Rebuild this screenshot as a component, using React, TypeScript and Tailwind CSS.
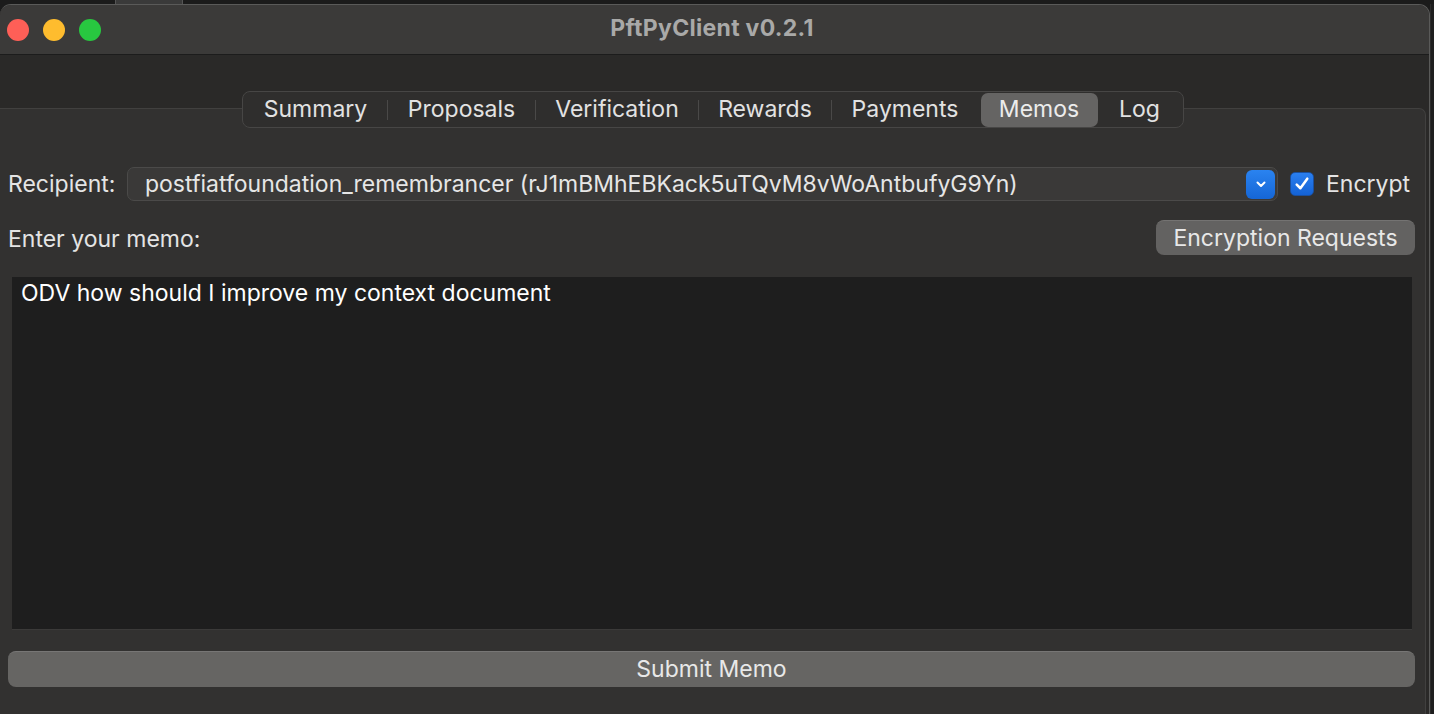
import React from "react";

const tabs = [
  { label: "Summary", w: "w-[144px]", sep: true },
  { label: "Proposals", w: "w-[148px]", sep: true },
  { label: "Verification", w: "w-[163px]", sep: true },
  { label: "Rewards", w: "w-[133px]", sep: true },
  { label: "Payments", w: "w-[147px]", sep: false },
];

export default function App() {
  return (
    <div
      className="w-[1434px] h-[714px] bg-[#1b1b1b] flex flex-col overflow-hidden text-[#e4e4e4]"
      style={{ fontFamily: "Inter, 'Liberation Sans', sans-serif" }}
    >
      {/* strip above window */}
      <div className="h-[4px] flex shrink-0">
        <div className="w-[115px]" />
        <div className="w-[68px] bg-[#3a3a3a] border-x border-[#555]" />
      </div>
      <div className="flex flex-1 min-h-0">
        {/* window */}
        <div className="w-[1430px] flex flex-col rounded-t-[11px] border-t border-r border-[#5a5a59] bg-[#2a2928] overflow-hidden">
          {/* title bar */}
          <div className="h-[50px] shrink-0 bg-[#3b3a39] border-b border-[#1c1c1c] flex items-center relative">
            <div className="flex items-center gap-[14px] pl-[7px] absolute left-0 top-0 h-full">
              <div className="w-[22px] h-[22px] rounded-full bg-[#fe5f57]" />
              <div className="w-[22px] h-[22px] rounded-full bg-[#febc2e]" />
              <div className="w-[22px] h-[22px] rounded-full bg-[#28c840]" />
            </div>
            <div className="flex-1 flex justify-center pr-[5px] pb-[2px]">
              <span className="text-[23px] font-bold text-[#a9a9a8] tracking-[0.3px]">
                PftPyClient v0.2.1
              </span>
            </div>
          </div>

          {/* content */}
          <div className="flex-1 flex flex-col pt-[36px]">
            {/* tab bar */}
            <div className="flex justify-center pr-[4px] relative z-10 -mb-[20px]">
              <div className="h-[37px] flex items-center rounded-[8px] border border-[#474645] bg-[#2f2e2d] pl-[1px] pr-[1px]">
                {tabs.map((t) => (
                  <div key={t.label} className={`${t.w} h-full flex items-center relative`}>
                    <div className="flex-1 text-center text-[23px] leading-[28px] pb-[1px] text-[#e2e2e2]">
                      {t.label}
                    </div>
                    {t.sep && <div className="absolute right-0 top-[8px] w-[1px] h-[20px] bg-[#4a4948]" />}
                  </div>
                ))}
                <div className="w-[2px]" />
                <div className="w-[117px] h-[34px] rounded-[7px] bg-[#656463] flex items-center justify-center text-[23px] leading-[28px] pb-[1px] text-[#ececec]">
                  Memos
                </div>
                <div className="w-[84px] h-full flex items-center justify-center text-[23px] leading-[28px] pb-[1px] text-[#e2e2e2]">
                  Log
                </div>
              </div>
            </div>

            {/* pane */}
            <div className="flex-1 mr-[3px] bg-[#323130] border-t border-r border-[#41403f] rounded-tr-[7px] flex flex-col pl-[8px] pr-[10px] pt-[58px]">
              {/* recipient row */}
              <div className="flex items-center h-[34px]">
                <span className="text-[23px] leading-[28px] w-[119px]">Recipient:</span>
                <div className="w-[1151px] h-[34px] rounded-[7px] border border-[#4b4a49] bg-[#3a3938] flex items-center pl-[17px] pr-[2px]">
                  <span className="flex-1 text-[23px] leading-[28px] text-[#e6e6e6] whitespace-nowrap">
                    postfiatfoundation_remembrancer (rJ1mBMhEBKack5uTQvM8vWoAntbufyG9Yn)
                  </span>
                  <div className="w-[29px] h-[29px] rounded-[6px] bg-gradient-to-b from-[#2a83f0] to-[#1566d6] flex items-center justify-center">
                    <svg width="14" height="14" viewBox="0 0 14 14" fill="none">
                      <path d="M3.5 5.5 L7 9 L10.5 5.5" stroke="white" strokeWidth="2" strokeLinecap="round" strokeLinejoin="round" />
                    </svg>
                  </div>
                </div>
                <div className="ml-[12px] w-[24px] h-[24px] rounded-[5px] bg-gradient-to-b from-[#2a7ff0] to-[#1462d4] border border-[#1a4f9e] flex items-center justify-center">
                  <svg width="18" height="18" viewBox="0 0 17 17" fill="none">
                    <path d="M3.5 9 L7 12.5 L13.5 3.5" stroke="white" strokeWidth="2.4" strokeLinecap="round" strokeLinejoin="round" />
                  </svg>
                </div>
                <span className="ml-[12px] text-[23px] leading-[28px]">Encrypt</span>
              </div>

              {/* memo label row */}
              <div className="mt-[19px] flex items-center justify-between h-[35px]">
                <span className="text-[23px] leading-[28px] pt-[3px]">Enter your memo:</span>
                <div className="w-[259px] h-[35px] rounded-[8px] bg-[#636261] border-t border-[#747372] flex items-center justify-center text-[23px] leading-[28px] pb-[1px] text-[#e8e8e8]">
                  Encryption Requests
                </div>
              </div>

              {/* textarea */}
              <div className="mt-[22px] ml-[4px] mr-[3px] h-[353px] bg-[#1e1e1e] border-b border-[#3b3a39] pl-[9px] pt-[2px]">
                <span className="text-[23px] leading-[28px] text-white">ODV how should I improve my context document</span>
              </div>

              {/* submit */}
              <div className="mt-[21px] h-[36px] rounded-[8px] bg-[#666563] border-t border-[#777675] flex items-center justify-center text-[23px] leading-[28px] pb-[1px] text-[#e8e8e8]">
                Submit Memo
              </div>
            </div>
          </div>
        </div>
        <div className="w-[4px] bg-[#1e1e1e] border-l border-[#2c2c2c]" />
      </div>
    </div>
  );
}
